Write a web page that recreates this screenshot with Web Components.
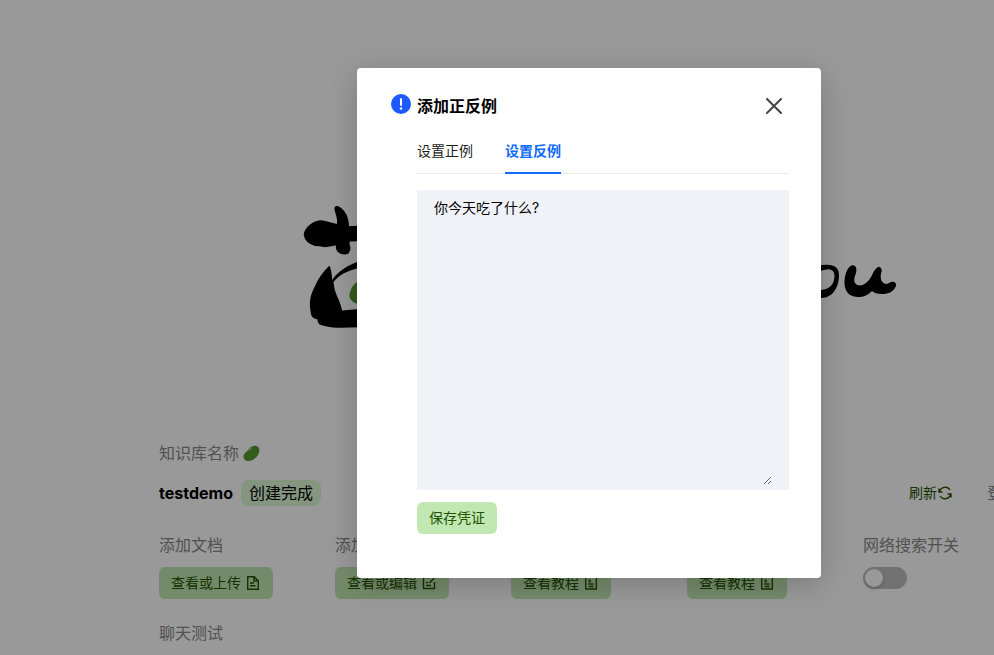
<!DOCTYPE html>
<html lang="zh-CN">
<head>
<meta charset="utf-8">
<title>知识库</title>
<style>
html{height:100%}
body{margin:0;min-height:100%;height:100%;overflow:hidden;background:#fff;color:#000;font:16px/24px Inter,"Noto Sans CJK SC",sans-serif}
</style>
</head>
<body>
<kb-app></kb-app>
<script>
const define = (name, html, setup) => {
  const template = document.createElement('template');
  template.innerHTML = html;
  customElements.define(name, class extends HTMLElement {
    constructor() {
      super();
      this.attachShadow({ mode: 'open' }).append(template.content.cloneNode(true));
    }
    connectedCallback() { if (setup) setup(this, this.shadowRoot); }
  });
};

const icons = {
  doc: '<path d="M1.700 .700h6.600l4 4v8.600H1.700zM8 1v4h4M4 7h4M4 9.800h5.500"/>',
  edit: '<path d="M8 1.500H1.500v11h11V6M4 6.500h2M4 9.500h5M7.500 7l5-5.500"/>',
  guide: '<path d="M1.700 1h10.600v12H1.700zM4.500 3.500l2 1.500-2 1.500M4.500 8h5M4.500 10.500h5"/>',
  refresh: '<path d="M1.500 5.500A5.800 5.800 0 0 1 12 4M12.500 8.500A5.800 5.800 0 0 1 2 10M1 2.500v3.500h3.500M13 11.500V8H9.500"/>',
  none: ''
};

define('kb-icon', `
<style>:host{display:inline-flex}svg{width:14px;height:14px;fill:none;stroke:currentColor;stroke-width:1.400}</style>
<svg viewBox="0 0 14 14" aria-hidden="true"></svg>`,
(el, root) => { root.querySelector('svg').innerHTML = icons[el.getAttribute('name')] || ''; });

define('kb-button', `
<style>
:host{display:inline-flex}
button{display:flex;align-items:center;gap:5px;height:32px;padding:0 12px;border:0;border-radius:6px;background:#c1e8b2;color:#255200;font:inherit;font-size:14px;line-height:22px;white-space:nowrap;cursor:pointer}
:host([plain]) button{background:none;padding:0;gap:1px}
::slotted(kb-icon){margin-right:1px}
:host([plain]) ::slotted(kb-icon){margin-right:0}
</style>
<button type="button"><slot></slot><slot name="icon"></slot></button>`);

define('kb-field', `
<style>
:host{display:flex;flex-direction:column;align-items:flex-start;gap:10px;min-width:0}
.label{height:24px;color:#888;white-space:nowrap}
</style>
<div class="label"><slot name="label"></slot></div><slot></slot>`);

define('kb-tag', `
<style>:host{display:inline-block;padding:1px 8px;border-radius:8px;background:#dcfad6}</style><slot></slot>`);

define('kb-switch', `
<style>
:host{display:flex}
input{appearance:none;box-sizing:border-box;width:44px;height:22px;margin:0;padding:2px;border-radius:11px;background:#bfbfbf;cursor:pointer}
input::before{content:"";display:block;width:18px;height:18px;border-radius:50%;background:#fff;box-shadow:0 2px 4px rgba(0,35,11,.2)}
input:checked{background:#559830}
input:checked::before{margin-left:auto}
</style>
<input type="checkbox" role="switch" aria-label="网络搜索开关">`);

define('kb-logo', `
<style>:host{display:flex;justify-content:center}svg{width:614px;height:136px}</style>
<svg viewBox="282 200 614 136" role="img" aria-label="logo">
<path d="M303.700 235C304 228 312 222 317.300 220.700Q322 219.500 329 222L337 224C338 217 334 212 334.500 207.500Q335 205.500 338 206Q346 210 348 219Q349 222 349 226.300L370 225V241L349.600 241.600V245Q352 249 348 254Q344 255 340 253.500Q335 251 336 245.600L325 247.300Q319 246 315 246Q305 243 303.700 235Z"/>
<path d="M329.700 266Q331 268 332.300 280C338 271 347 266 357 262L370 259V265L357 268.500C347 271 339 275 333.500 282C335 297 340 298 342 310.500L370 308V327L340 327.700Q328 328 319.500 324.600Q317 322 317.600 319.500Q312 318 311.300 315C308 301 311 294 315 286Q320 275 328.500 266.600Z"/>
<path fill="#559830" d="M366 278Q353 281 350 292Q347 300 357 304H366Z"/>
<path fill-rule="evenodd" d="M810 270Q818 264 830 265Q839 266 839 275C839 287 833 298 821 298H810ZM818 272L821 270.700Q834.500 266 834.500 276Q834 289 821 290H815Z"/>
<path d="M849.300 267Q852 264 855.500 266.500Q857 269 856 273Q853 280 855 283Q859 288 866 283Q870 280 873 273Q876 267 879.300 266.700Q882 268 881.700 271C879 279 882 284 886.700 284C889 284 891 281 893.500 282Q896.500 282 896 286C893 293 887 294 882 294Q875 294 872 291Q866 297 859 297C848 297 844 290 844.500 281Q845 272 849.300 267Z"/>
</svg>`);

define('kb-home', `
<style>
:host{display:block}
.hero{box-sizing:border-box;height:441px;padding-top:200px}
main{width:73%;margin:0 auto}
.caption{display:flex;align-items:center;gap:4px;color:#888;height:24px}
.caption svg{width:17px;height:17px}
.summary{display:flex;align-items:center;height:26px;margin-top:15px;white-space:nowrap}
h1{margin:0 8px 0 0;font-size:16px;line-height:24px;font-weight:700}
.refresh{margin-left:auto}
.login{margin-left:35px;color:#888;text-decoration:none}
.fields{display:grid;grid-template-columns:repeat(5,minmax(0,1fr));column-gap:20px;row-gap:22px;margin-top:27px}
</style>
<div class="hero"><kb-logo></kb-logo></div>
<main>
<div class="caption">知识库名称
<svg viewBox="0 0 17 17" aria-hidden="true"><path fill="#559830" d="M1 9.500C2 7 4 7 5.500 4.500C7.500 1.500 10.500 .300 13.500 1C17 2 17 6.500 15 10C12 14.500 8 16.500 4 16C.500 15 0 12 1 9.500Z"/><path d="M5.500 5q2.500-.500 2.500-2.500" fill="none" stroke="#d5e8cb"/></svg></div>
<div class="summary"><h1>testdemo</h1><kb-tag>创建完成</kb-tag>
<kb-button plain class="refresh">刷新<kb-icon slot="icon" name="refresh"></kb-icon></kb-button>
<a class="login" href="#">登录</a></div>
<div class="fields">
<kb-field><span slot="label">添加文档</span><kb-button>查看或上传<kb-icon slot="icon" name="doc"></kb-icon></kb-button></kb-field>
<kb-field><span slot="label">添加</span><kb-button>查看或编辑<kb-icon slot="icon" name="edit"></kb-icon></kb-button></kb-field>
<kb-field><kb-button>查看教程<kb-icon slot="icon" name="guide"></kb-icon></kb-button></kb-field>
<kb-field><kb-button>查看教程<kb-icon slot="icon" name="guide"></kb-icon></kb-button></kb-field>
<kb-field><span slot="label">网络搜索开关</span><kb-switch></kb-switch></kb-field>
<kb-field><span slot="label">聊天测试</span></kb-field>
</div>
</main>`);

define('kb-tabs', `
<style>
:host{display:flex;gap:32px;border-bottom:1px solid #ebebeb}
button{height:34px;margin-bottom:-1px;padding:0 0 10px;border:0;border-bottom:2px solid transparent;background:none;color:#1c1f23;font:inherit;font-size:14px;line-height:22px;cursor:pointer}
button[aria-selected=true]{color:#0f6bff;border-color:#0f6bff;font-weight:700}
</style>
<button type="button" role="tab" aria-selected="false">设置正例</button><button type="button" role="tab" aria-selected="true">设置反例</button>`,
(el, root) => {
  const tabs = root.querySelectorAll('button');
  tabs.forEach(tab => tab.onclick = () => tabs.forEach(t => t.setAttribute('aria-selected', t === tab)));
});

define('kb-textarea', `
<style>
:host{display:flex;box-sizing:border-box;height:300px;padding:5px 17px;background:#f1f2f8}
textarea{flex:1;min-width:0;box-sizing:border-box;border:0;outline:0;margin:0;padding:2px 0;background:transparent;color:#000;font:inherit;font-size:14px;line-height:22px;resize:vertical}
</style>
<textarea aria-label="反例">你今天吃了什么?</textarea>`);

define('kb-dialog', `
<style>
:host{display:block;box-sizing:border-box;width:464px;padding:26px 32px 44px 34px;border-radius:4px;background:#fff;box-shadow:0 6px 30px rgba(0,0,0,.2)}
header{display:flex;align-items:flex-start;gap:6px}
.info{width:20px;height:20px}
h2{flex:1;margin:0;font-size:16px;line-height:24px;font-weight:700}
.close{display:flex;margin:0;padding:4px 7px;border:0;background:none;color:#444;cursor:pointer}
.close svg{width:16px;height:16px}
.body{margin:22px 0 0 26px}
</style>
<header>
<svg class="info" viewBox="0 0 20 20" aria-hidden="true"><circle cx="10" cy="10" r="10" fill="#1c59ff"/><path d="M10 5v6" stroke="#fff" stroke-width="2" stroke-linecap="round"/><circle cx="10" cy="14.500" r="1.200" fill="#fff"/></svg>
<h2><slot name="title"></slot></h2>
<button class="close" type="button" aria-label="关闭"><svg viewBox="0 0 16 16" aria-hidden="true"><path d="M1 1l14 14M15 1L1 15" stroke="currentColor" stroke-width="2" stroke-linecap="round"/></svg></button>
</header>
<div class="body"><slot></slot></div>`);

define('kb-app', `
<style>
:host{display:block;position:relative;min-width:1178px;height:100%;overflow:hidden}
.overlay{position:absolute;inset:0;display:flex;justify-content:center;align-items:flex-start;padding-top:68px;background:rgba(0,0,0,.4)}
kb-textarea{margin:16px 0 12px}
</style>
<kb-home></kb-home>
<div class="overlay"><kb-dialog role="dialog" aria-modal="true" aria-label="添加正反例"><span slot="title">添加正反例</span>
<kb-tabs role="tablist"></kb-tabs><kb-textarea></kb-textarea><kb-button>保存凭证</kb-button></kb-dialog></div>`);
</script>
</body>
</html>
